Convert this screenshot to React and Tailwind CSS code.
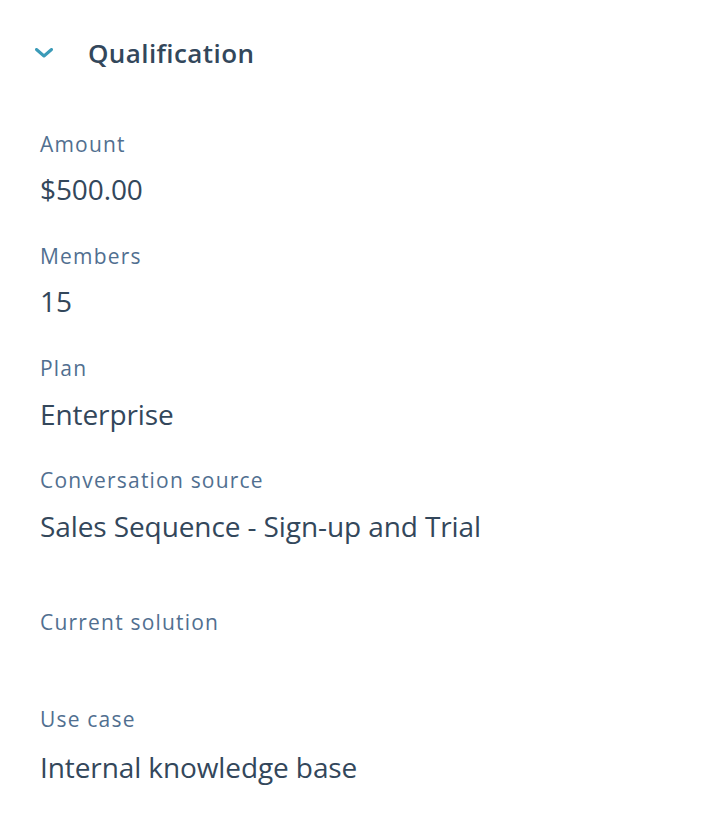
import React from "react";

const fields = [
  { label: "Amount", value: "$500.00", gap: "mb-[35px]", top: "mt-[13px]" },
  { label: "Members", value: "15", gap: "mb-[35px]", top: "mt-[13px]" },
  { label: "Plan", value: "Enterprise", gap: "mb-[34px]", top: "mt-[14px]" },
  { label: "Conversation source", value: "Sales Sequence - Sign-up and Trial", gap: "mb-[64px]", top: "mt-[14px]" },
  { label: "Current solution", value: "", gap: "mb-[69px]", top: "" },
  { label: "Use case", value: "Internal knowledge base", gap: "", top: "mt-[16px]" },
];

const App = () => {
  return (
    <div
      className="w-[706px] h-[834px] bg-white text-[#33475b]"
      style={{ fontFamily: "'Open Sans', Lato, sans-serif" }}
    >
      <div className="flex items-center pl-[35px] pt-[36px] h-[70px]">
        <svg width="18" height="10" viewBox="0 0 18 10" className="mr-[35px]">
          <path d="M1.5 1.5 L9 8 L16.5 1.5" fill="none" stroke="#3b9bb8" strokeWidth="3" strokeLinecap="round" strokeLinejoin="round" />
        </svg>
        <h2 className="text-[26px] font-semibold leading-[34px] tracking-[0.4px] text-[#33475b]">Qualification</h2>
      </div>

      <div className="pl-[40px] pt-[60px]">
        {fields.map((f) => (
          <div key={f.label} className={f.gap}>
            <div className="text-[21px] leading-[28px] tracking-[1.2px] text-[#516f90]">{f.label}</div>
            {f.value && (
              <div className={`${f.top} text-[28px] leading-[36px] tracking-[-0.1px] text-[#33475b]`}>{f.value}</div>
            )}
          </div>
        ))}
      </div>
    </div>
  );
};

export default App;
